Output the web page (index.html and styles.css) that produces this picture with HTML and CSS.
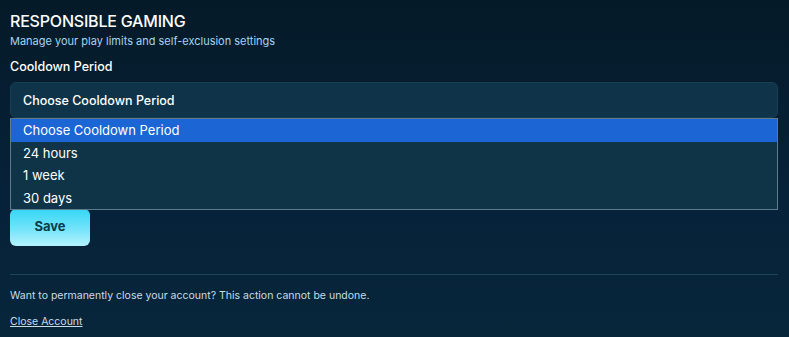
FILE: index.html
```html
<!DOCTYPE html>
<html lang="en">
<head>
<meta charset="utf-8">
<title>Responsible Gaming</title>
<link rel="stylesheet" href="styles.css">
</head>
<body>
<main class="panel">
  <h1 class="title">RESPONSIBLE GAMING</h1>
  <p class="subtitle">Manage your play limits and self-exclusion settings</p>
  <label class="label">Cooldown Period</label>
  <div class="select-wrap">
    <div class="select">Choose Cooldown Period</div>
    <ul class="dropdown">
      <li class="option active">Choose Cooldown Period</li>
      <li class="option">24 hours</li>
      <li class="option">1 week</li>
      <li class="option">30 days</li>
    </ul>
  </div>
  <button class="save">Save</button>
  <hr class="divider">
  <p class="warning">Want to permanently close your account? This action cannot be undone.</p>
  <a class="close-link" href="#">Close Account</a>
</main>
</body>
</html>
```
FILE: styles.css
```css
* { box-sizing: border-box; }
html, body { margin: 0; height: 100%; }
body {
  background: linear-gradient(180deg, #051a28 0%, #06223a 60%, #07263a 100%);
  font-family: Inter, "Noto Sans", sans-serif;
  color: #ffffff;
  overflow: hidden;
}
.panel {
  padding: 11px 11px 0 10px;
  display: flex;
  flex-direction: column;
}
.title {
  margin: 0;
  font-size: 16px;
  font-weight: 500;
  line-height: 20px;
  letter-spacing: -0.2px;
}
.subtitle {
  margin: 2px 0 0;
  font-size: 11px;
  line-height: 16px;
  color: #a6d4ef;
}
.label {
  margin-top: 10px;
  font-size: 12.5px;
  font-weight: 500;
  line-height: 16px;
}
.select-wrap {
  position: relative;
  margin-top: 7px;
}
.select {
  height: 36px;
  background: #0f3349;
  border: 1px solid #173f54;
  border-radius: 6px;
  padding: 0 12px;
  display: flex;
  align-items: center;
  font-size: 12.5px;
  font-weight: 500;
}
.dropdown {
  position: absolute;
  left: 0;
  right: 0;
  top: 36px;
  margin: 0;
  padding: 0;
  list-style: none;
  background: #0f3448;
  border: 1px solid #5d7b8b;
  z-index: 2;
}
.option {
  height: 22.5px;
  padding: 0 12px;
  display: flex;
  align-items: center;
  font-size: 13px;
}
.option.active { background: #1b66d4; }
.save {
  align-self: flex-start;
  margin-top: 91px;
  width: 80px;
  height: 37px;
  border: none;
  border-radius: 6px;
  background: linear-gradient(180deg, #35d6f5 0%, #74e4fa 55%, #b3f2fd 100%);
  color: #0b3b4c;
  font-family: inherit;
  font-size: 13px;
  font-weight: 700;
  padding-bottom: 4px;
}
.divider {
  margin: 28px 0 0;
  border: none;
  border-top: 1px solid #1b4658;
}
.warning {
  margin: 14px 0 0;
  font-size: 10.5px;
  line-height: 14px;
  color: #c9dce6;
}
.close-link {
  margin-top: 12px;
  align-self: flex-start;
  font-size: 10.5px;
  line-height: 14px;
  color: #c9dce6;
  text-decoration: underline;
}
```
